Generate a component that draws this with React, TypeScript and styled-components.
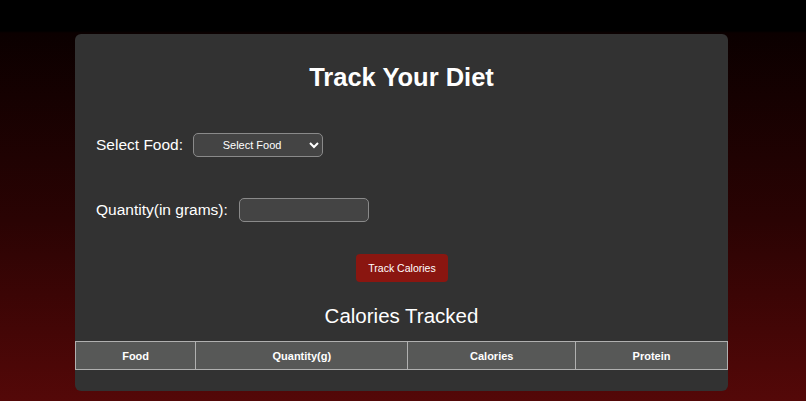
import React from 'react';
import styled, { createGlobalStyle } from 'styled-components';

const GlobalStyle = createGlobalStyle`
  html, body {
    margin: 0;
    padding: 0;
  }
  body {
    min-height: 401px;
    font-family: "Liberation Sans", Arial, sans-serif;
    background: linear-gradient(
      to bottom,
      #000 0,
      #000 31px,
      #0b0000 33px,
      #2a0303 55%,
      #540808 100%
    );
    color: #fff;
  }
`;

const Page = styled.div`
  padding-top: 34px;
  padding-left: 75px;
`;

const Card = styled.div`
  width: 653px;
  background: #323232;
  border-radius: 6px;
  padding: 27px 0 21px;
  box-sizing: border-box;
`;

const Title = styled.h1`
  margin: 0;
  text-align: center;
  font-size: 25.5px;
  font-weight: 700;
  line-height: 32px;
`;

const Field = styled.div<{ $gap: number }>`
  display: flex;
  align-items: center;
  gap: ${(p) => p.$gap}px;
  padding-left: 21px;
`;

const Label = styled.label`
  font-size: 15.5px;
  line-height: 20px;
`;

const Select = styled.select`
  width: 130px;
  height: 24px;
  background: #444;
  color: #fff;
  border: 1px solid #8a8a8a;
  border-radius: 5px;
  font-family: "Liberation Sans", Arial, sans-serif;
  font-size: 11px;
  text-align: center;
  text-align-last: center;
  padding: 0 4px;
`;

const Input = styled.input`
  width: 130px;
  height: 24px;
  box-sizing: border-box;
  background: #444;
  color: #fff;
  border: 1px solid #8a8a8a;
  border-radius: 5px;
`;

const Form = styled.div`
  display: flex;
  flex-direction: column;
  gap: 41px;
  margin-top: 40px;
`;

const ButtonRow = styled.div`
  display: flex;
  justify-content: center;
  margin-top: 32px;
  padding-left: 1px;
`;

const TrackButton = styled.button`
  width: 92px;
  height: 28px;
  background: #8a1610;
  color: #fff;
  border: none;
  border-radius: 4px;
  font-family: "Liberation Sans", Arial, sans-serif;
  font-size: 10.5px;
`;

const SubTitle = styled.h2`
  margin: 21px 0 12px;
  text-align: center;
  font-size: 20.5px;
  font-weight: 400;
  line-height: 26px;
`;

const Table = styled.table`
  width: 100%;
  border-collapse: collapse;
  table-layout: fixed;
`;

const Th = styled.th<{ $w: number }>`
  width: ${(p) => p.$w}%;
  height: 27px;
  padding: 0;
  background: #575857;
  border: 1px solid #b0b0b0;
  font-size: 11px;
  font-weight: 700;
  color: #fff;
`;

// column shares of the table width
const columns = [
  { label: 'Food', width: 18.4 },
  { label: 'Quantity(g)', width: 32.6 },
  { label: 'Calories', width: 25.7 },
  { label: 'Protein', width: 23.3 },
];

export default function App() {
  return (
    <>
      <GlobalStyle />
      <Page>
        <Card>
          <Title>Track Your Diet</Title>
          <Form>
            <Field $gap={10}>
              <Label>Select Food:</Label>
              <Select defaultValue="">
                <option value="">Select Food</option>
              </Select>
            </Field>
            <Field $gap={11}>
              <Label>Quantity(in grams):</Label>
              <Input type="number" />
            </Field>
          </Form>
          <ButtonRow>
            <TrackButton>Track Calories</TrackButton>
          </ButtonRow>
          <SubTitle>Calories Tracked</SubTitle>
          <Table>
            <thead>
              <tr>
                {columns.map((c) => (
                  <Th key={c.label} $w={c.width}>
                    {c.label}
                  </Th>
                ))}
              </tr>
            </thead>
          </Table>
        </Card>
      </Page>
    </>
  );
}
